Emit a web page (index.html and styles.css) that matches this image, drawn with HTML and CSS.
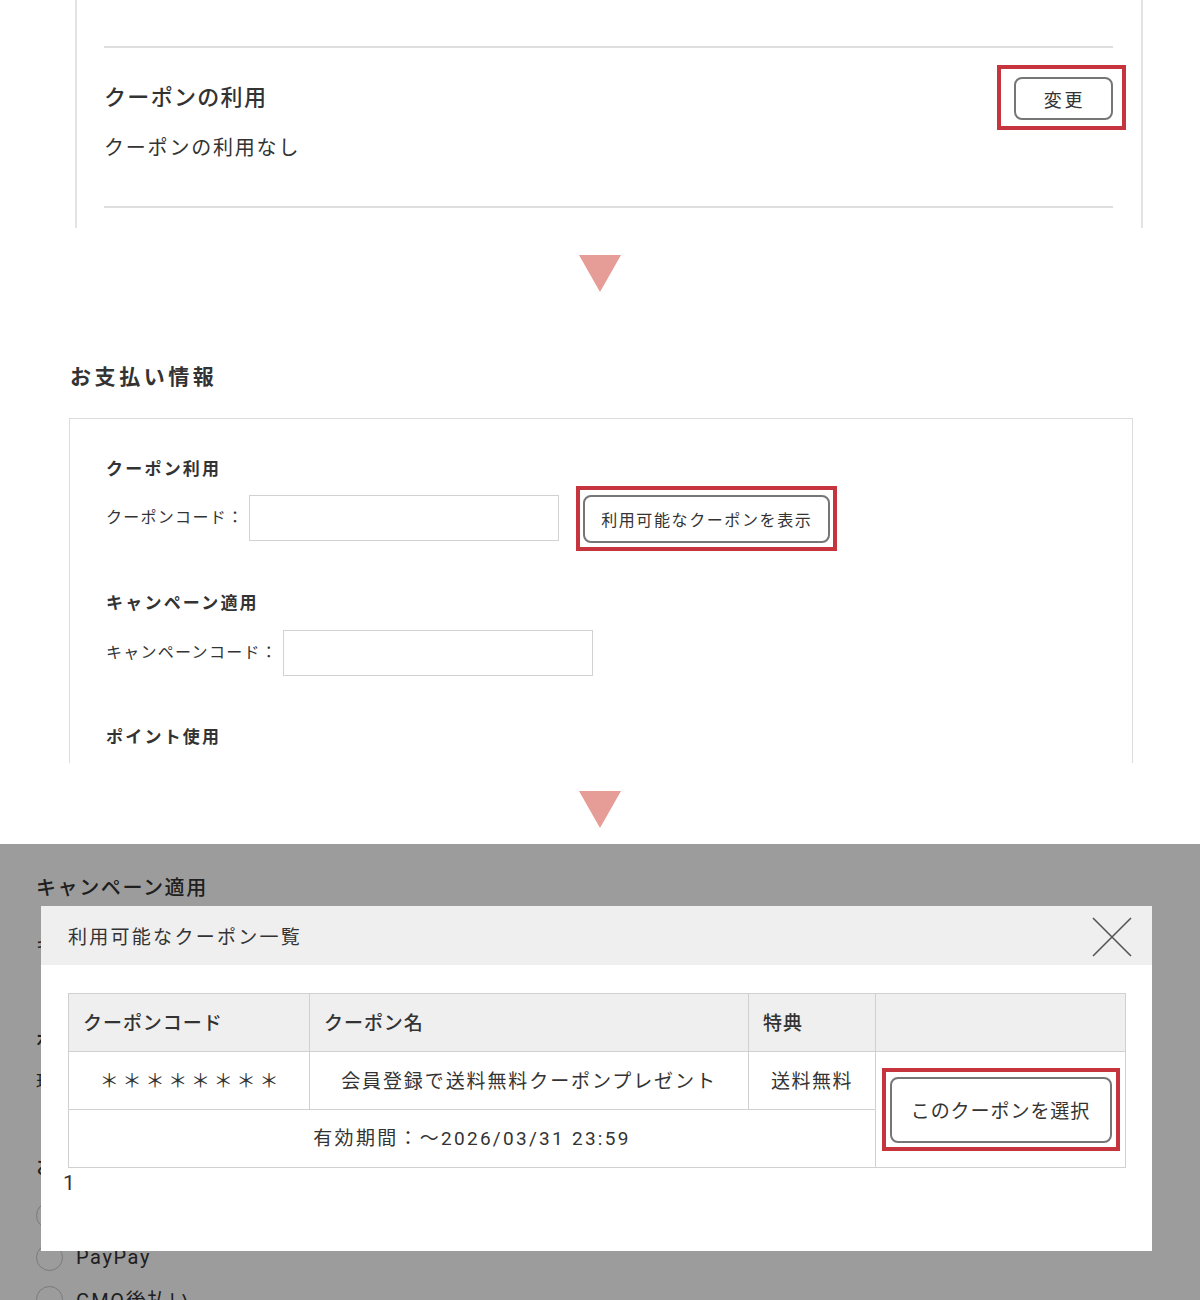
FILE: index.html
```html
<!DOCTYPE html>
<html lang="ja">
<head>
<meta charset="utf-8">
<title>クーポンの利用手順</title>
<link rel="stylesheet" href="styles.css">
</head>
<body>
<section class="step step-confirm">
  <div class="confirm-card">
    <div class="confirm-row">
      <div class="confirm-info">
        <h3 class="confirm-title">クーポンの利用</h3>
        <p class="confirm-text">クーポンの利用なし</p>
      </div>
      <div class="mark mark-change">
        <button class="btn btn-change" type="button">変更</button>
      </div>
    </div>
  </div>
</section>

<div class="arrow arrow-first"><span class="tri"></span></div>

<section class="step step-pay">
  <h2 class="pay-heading">お支払い情報</h2>
  <div class="pay-card">
    <h4 class="field-title">クーポン利用</h4>
    <div class="field-row">
      <label class="field-label">クーポンコード：</label>
      <input class="field-input" type="text">
      <div class="mark mark-show">
        <button class="btn btn-show" type="button">利用可能なクーポンを表示</button>
      </div>
    </div>
    <h4 class="field-title field-title-gap">キャンペーン適用</h4>
    <div class="field-row">
      <label class="field-label">キャンペーンコード：</label>
      <input class="field-input" type="text">
    </div>
    <h4 class="field-title field-title-gap2">ポイント使用</h4>
  </div>
</section>

<div class="arrow arrow-second"><span class="tri"></span></div>

<section class="step step-modal">
  <div class="bg-page">
    <h4 class="bg-title">キャンペーン適用</h4>
    <div class="bg-row">
      <span class="bg-label">キャンペーンコード：</span>
      <span class="bg-input"></span>
    </div>
    <h4 class="bg-title bg-title-point">ポイント使用</h4>
    <p class="bg-text">現在のポイント：0pt</p>
    <h4 class="bg-title bg-title-method">お支払い方法</h4>
    <ul class="bg-radios">
      <li class="bg-radio"><span class="radio-circle"></span><span class="radio-label">クレジットカード</span></li>
      <li class="bg-radio"><span class="radio-circle"></span><span class="radio-label">PayPay</span></li>
      <li class="bg-radio"><span class="radio-circle"></span><span class="radio-label">GMO後払い</span></li>
    </ul>
  </div>
  <div class="overlay"></div>
  <div class="modal">
    <div class="modal-header">
      <h3 class="modal-title">利用可能なクーポン一覧</h3>
      <span class="modal-close" aria-label="閉じる">
        <svg width="40" height="40" viewBox="0 0 40 40"><path d="M1 1 L39 39 M39 1 L1 39" stroke="#555" stroke-width="1.6" fill="none"/></svg>
      </span>
    </div>
    <div class="modal-body">
      <table class="coupon-table">
        <colgroup>
          <col class="col-code"><col class="col-name"><col class="col-benefit"><col class="col-action">
        </colgroup>
        <thead>
          <tr><th>クーポンコード</th><th>クーポン名</th><th>特典</th><th></th></tr>
        </thead>
        <tbody>
          <tr>
            <td class="cell-code">＊＊＊＊＊＊＊＊</td>
            <td class="cell-name">会員登録で送料無料クーポンプレゼント</td>
            <td>送料無料</td>
            <td class="cell-action" rowspan="2">
              <div class="mark mark-select">
                <button class="btn btn-select" type="button">このクーポンを選択</button>
              </div>
            </td>
          </tr>
          <tr>
            <td class="cell-period" colspan="3">有効期間：～2026/03/31 23:59</td>
          </tr>
        </tbody>
      </table>
      <p class="modal-count">1</p>
    </div>
  </div>
</section>
</body>
</html>
```

FILE: styles.css
```css
* { box-sizing: border-box; }

html, body {
  margin: 0;
  padding: 0;
  background: #fff;
}

body {
  width: 1200px;
  font-family: Roboto, "Noto Sans CJK JP", sans-serif;
  color: #333;
}

h2, h3, h4, p, ul { margin: 0; padding: 0; }
ul { list-style: none; }

/* ---------- annotation marks ---------- */
.mark { position: relative; display: inline-block; }
.mark::after {
  content: "";
  position: absolute;
  border: 4px solid #c6353e;
  pointer-events: none;
}
.mark-change::after { left: -17px; right: -13px; top: -12px; bottom: -10px; }
.mark-show::after { left: -7px; right: -7px; top: -9px; bottom: -8px; }
.mark-select::after { left: -8px; right: -8px; top: -9px; bottom: -8px; }

/* ---------- buttons ---------- */
.btn {
  font-family: inherit;
  color: #333;
  background: #fff;
  border: 2px solid #767676;
  border-radius: 8px;
  padding: 0;
  cursor: pointer;
  display: block;
}

/* ---------- step 1 ---------- */
.confirm-card {
  margin-left: 75px;
  width: 1068px;
  border-left: 2px solid #e3e3e3;
  border-right: 2px solid #e3e3e3;
  padding: 46px 28px 20px 27px;
}

.confirm-row {
  display: flex;
  justify-content: space-between;
  align-items: flex-start;
  border-top: 2px solid #dedede;
  border-bottom: 2px solid #dedede;
  padding: 29px 0 43px;
}

.confirm-info { padding-top: 5px; }

.confirm-title {
  font-size: 22px;
  line-height: 32px;
  font-weight: 500;
  letter-spacing: 0.06em;
}

.confirm-text {
  margin-top: 19px;
  font-size: 20px;
  line-height: 30px;
  letter-spacing: 0.09em;
}

.btn-change {
  width: 99px;
  height: 43px;
  font-size: 18px;
  letter-spacing: 0.15em;
  padding-left: 2px;
}

/* ---------- arrows ---------- */
.arrow {
  display: flex;
  justify-content: center;
}
.arrow-first { padding: 27px 0 70px; }
.arrow-second { padding: 28px 0 16px; }

.tri {
  width: 0;
  height: 0;
  border-left: 21px solid transparent;
  border-right: 21px solid transparent;
  border-top: 37px solid #e69c97;
}

/* ---------- step 2 ---------- */
.step-pay { padding-left: 69px; }

.pay-heading {
  font-size: 21px;
  line-height: 30px;
  font-weight: 700;
  letter-spacing: 0.17em;
  margin: 0 0 26px 1px;
}

.pay-card {
  width: 1064px;
  border: 1px solid #dcdcdc;
  border-bottom: none;
  padding: 37px 35px 13px 36px;
}

.field-title {
  font-size: 17px;
  line-height: 26px;
  font-weight: 700;
  letter-spacing: 0.13em;
}
.field-title-gap { margin-top: 47px; }
.field-title-gap2 { margin-top: 48px; }

.field-row {
  display: flex;
  align-items: flex-start;
  margin-top: 13px;
}
.field-title-gap + .field-row { margin-top: 14px; }

.field-label {
  font-size: 16px;
  line-height: 46px;
  letter-spacing: 0.08em;
  margin-right: 5px;
}

.field-input {
  width: 310px;
  height: 46px;
  border: 1px solid #d2d2d2;
  border-radius: 0;
  background: #fff;
  padding: 0 10px;
  font-family: inherit;
  font-size: 16px;
  outline: none;
}

.mark-show { margin-left: 24px; }

.btn-show {
  width: 247px;
  height: 48px;
  font-size: 16px;
  letter-spacing: 0.1em;
}

/* ---------- step 3 (modal) ---------- */
.step-modal {
  position: relative;
  height: 456px;
  overflow: hidden;
}

.bg-page {
  padding: 29px 0 0 36px;
}

.bg-title {
  font-size: 20px;
  line-height: 30px;
  font-weight: 500;
  letter-spacing: 0.08em;
}
.bg-title-point { margin-top: 62px; }
.bg-title-method { margin-top: 55px; }

.bg-row {
  display: flex;
  align-items: center;
  margin-top: 20px;
  height: 40px;
}
.bg-label {
  font-size: 17px;
  letter-spacing: 0.08em;
}
.bg-input {
  display: block;
  width: 320px;
  height: 44px;
  border: 1px solid #ccc;
  margin-left: 6px;
}

.bg-text {
  margin-top: 14px;
  font-size: 18px;
  line-height: 28px;
  letter-spacing: 0.08em;
}

.bg-radios { margin-top: 12px; }
.bg-radio {
  display: flex;
  align-items: center;
  height: 42px;
}
.radio-circle {
  width: 27px;
  height: 27px;
  border: 1px solid #c8c8c8;
  border-radius: 50%;
  background: #fff;
}
.radio-label {
  margin-left: 13px;
  font-size: 20px;
  letter-spacing: 0.08em;
}

.overlay {
  position: absolute;
  inset: 0;
  background: rgba(0, 0, 0, 0.39);
}

.modal {
  position: absolute;
  top: 62px;
  left: 41px;
  width: 1111px;
  height: 345px;
  background: #fff;
}

.modal-header {
  height: 59px;
  background: #efefef;
  display: flex;
  align-items: center;
  justify-content: space-between;
  padding: 0 20px 0 27px;
}

.modal-title {
  font-size: 19px;
  font-weight: 400;
  letter-spacing: 0.12em;
  padding-bottom: 1px;
}

.modal-close {
  display: block;
  width: 40px;
  height: 40px;
  margin-top: 2px;
}
.modal-close svg { display: block; }

.modal-body { padding: 28px 27px 0; }

.coupon-table {
  width: 1057px;
  border-collapse: collapse;
  table-layout: fixed;
  border: 1px solid #d0d0d0;
}
.col-code { width: 241px; }
.col-name { width: 439px; }
.col-benefit { width: 127px; }
.col-action { width: 250px; }

.coupon-table th,
.coupon-table td {
  border: 1px solid #d0d0d0;
  height: 58px;
  font-size: 19px;
  font-weight: 400;
  letter-spacing: 0.08em;
  padding: 0 0 2px;
}

.coupon-table th {
  background: #efefef;
  text-align: left;
  padding-left: 14px;
  font-weight: 500;
  letter-spacing: 0.05em;
}

.coupon-table td { text-align: center; }

.coupon-table .cell-code { letter-spacing: 0.2em; padding-left: 4px; }
.coupon-table .cell-name { letter-spacing: 0.1em; }
.coupon-table .cell-period { letter-spacing: 0.12em; padding-bottom: 4px; }
.coupon-table .cell-action { padding-bottom: 0; }

.btn-select {
  width: 222px;
  height: 66px;
  font-size: 19px;
  letter-spacing: 0.05em;
}

.modal-count {
  margin-left: -5px;
  font-size: 21px;
  line-height: 30px;
}
```
